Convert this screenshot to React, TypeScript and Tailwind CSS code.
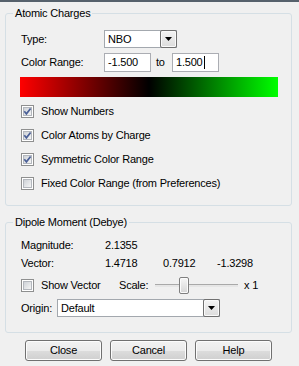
import React from 'react';

const Check: React.FC<{ checked?: boolean }> = ({ checked }) => (
  <svg width="13" height="13" viewBox="0 0 13 13" className="shrink-0">
    <defs>
      <linearGradient id="cbfill" x1="0" y1="0" x2="1" y2="1">
        <stop offset="0" stopColor="#cbcfd5" />
        <stop offset="1" stopColor="#f7f7f7" />
      </linearGradient>
    </defs>
    <rect x="0.5" y="0.5" width="12" height="12" fill="#fff" stroke="#8e8f8f" />
    <rect x="2.5" y="2.5" width="8" height="8" fill="url(#cbfill)" stroke="#b3b7bd" />
    {checked && (
      <path d="M3.3 6.3 L5.4 8.8 L9.6 3.4" stroke="#4a5f97" strokeWidth="1.7" fill="none" />
    )}
  </svg>
);

const DropButton: React.FC = () => (
  <span className="w-[17px] -my-px -mr-px shrink-0 border border-[#707070] rounded-[2px] bg-[linear-gradient(to_bottom,#f4f4f4,#dcdcdc)] shadow-[inset_0_0_0_1px_#fafafa] flex items-center justify-center">
    <svg width="7" height="4" viewBox="0 0 7 4">
      <polygon points="0,0 7,0 3.5,4" fill="#000" />
    </svg>
  </span>
);

const Select: React.FC<{ value: string; width: string }> = ({ value, width }) => (
  <div className={`${width} h-full flex border border-[#a3a8ae] bg-white`}>
    <span className="flex-1 pl-[3px] flex items-center">{value}</span>
    <DropButton />
  </div>
);

const Button: React.FC<{ label: string }> = ({ label }) => (
  <div className="w-[77px] h-[21px] flex items-center justify-center border border-[#707070] rounded-[3px] bg-[linear-gradient(to_bottom,#f2f2f2_0%,#ebebeb_50%,#dddddd_50%,#cfcfcf_100%)] shadow-[inset_0_0_0_1px_#fcfcfc]">
    {label}
  </div>
);

const App: React.FC = () => {
  return (
    <div className="w-[299px] h-[366px] overflow-hidden bg-[#f0f0f0] border-t-2 border-[#56616c] px-[5px] pt-[5px] text-[11px] tracking-[-0.2px] text-black font-['Liberation_Sans',Arial,sans-serif]">
      {/* Atomic Charges */}
      <fieldset className="w-[287px] h-[199px] border border-[#d5dfe5] rounded-[3px] pl-[15px]">
        <legend className="ml-[-8px] px-[2px] leading-[13px]">Atomic Charges</legend>

        <div className="mt-[10px] h-[18px] flex items-center">
          <span className="w-[83px]">Type:</span>
          <Select value="NBO" width="w-[73px]" />
        </div>

        <div className="mt-[5px] h-[19px] flex items-center">
          <span className="w-[83px]">Color Range:</span>
          <div className="w-[47px] h-full border border-[#abadb3] bg-white px-[3px] flex items-center">-1.500</div>
          <span className="w-[21px] pl-[5px]">to</span>
          <div className="w-[47px] h-full border border-[#abadb3] bg-white px-[3px] flex items-center">
            1.500
            <span className="ml-px w-px h-[13px] bg-black" />
          </div>
        </div>

        <div className="mt-[5px] -ml-px w-[258px] h-[20px] bg-[linear-gradient(to_right,#ff0000,#000000_50%,#00ff00)]" />

        <div className="mt-[2px]">
          {[
            { label: 'Show Numbers', checked: true },
            { label: 'Color Atoms by Charge', checked: true },
            { label: 'Symmetric Color Range', checked: true },
            { label: 'Fixed Color Range (from Preferences)', checked: false },
          ].map((item) => (
            <div key={item.label} className="h-[24px] flex items-center gap-[7px]">
              <Check checked={item.checked} />
              <span>{item.label}</span>
            </div>
          ))}
        </div>
      </fieldset>

      {/* Dipole Moment */}
      <fieldset className="mt-[10px] w-[287px] h-[117px] border border-[#d5dfe5] rounded-[3px] pl-[15px]">
        <legend className="ml-[-8px] px-[2px] leading-[13px]">Dipole Moment (Debye)</legend>

        <div className="mt-[7px] h-[18px] flex items-center">
          <span className="w-[84px]">Magnitude:</span>
          <span>2.1355</span>
        </div>
        <div className="h-[18px] flex items-center">
          <span className="w-[84px]">Vector:</span>
          <span className="w-[58px]">1.4718</span>
          <span className="w-[54px]">0.7912</span>
          <span>-1.3298</span>
        </div>

        <div className="mt-[2px] h-[22px] flex items-center">
          <Check />
          <span className="ml-[7px] w-[78px]">Show Vector</span>
          <span className="w-[36px]">Scale:</span>
          <div className="relative w-[83px] h-[17px]">
            <div className="absolute left-0 right-0 top-[7px] h-[3px] border-t border-[#a9a9a9] bg-[#e6e6e6]" />
            <div className="absolute left-[24px] top-0 w-[10px] h-[17px] rounded-[2px] border border-[#7f7f7f] bg-[linear-gradient(to_bottom,#f6f6f6,#d6d6d6)] shadow-[inset_0_0_0_1px_#fbfbfb]" />
          </div>
          <span className="ml-[6px]">x 1</span>
        </div>

        <div className="mt-[3px] h-[18px] flex items-center">
          <span className="w-[36px]">Origin:</span>
          <Select value="Default" width="w-[163px]" />
        </div>
      </fieldset>

      {/* Buttons */}
      <div className="mt-[7px] pl-[20px] flex gap-[8px]">
        <Button label="Close" />
        <Button label="Cancel" />
        <Button label="Help" />
      </div>
    </div>
  );
};

export default App;
